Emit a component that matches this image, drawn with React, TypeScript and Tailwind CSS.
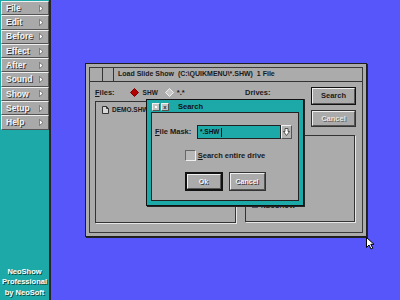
import React from 'react';

const menu = ['File', 'Edit', 'Before', 'Effect', 'After', 'Sound', 'Show', 'Setup', 'Help'];

const raised = 'border border-t-[#f0f0f0] border-l-[#f0f0f0] border-b-[#555] border-r-[#555]';
const embossed = 'text-[#f4f4f4] [text-shadow:1px_1px_0_#3a3a3a]';

const Arrow = () => (
  <svg width="5" height="7" viewBox="0 0 5 7" className="mr-[4px]">
    <polygon points="0.5,0.5 4,3.5 0.5,6.5" fill="#fff" stroke="#444" strokeWidth="0.6" />
  </svg>
);

const Diamond = ({ fill, stroke }: { fill: string; stroke: string }) => (
  <svg width="9" height="9" viewBox="0 0 9 9">
    <polygon points="4.5,0.5 8.5,4.5 4.5,8.5 0.5,4.5" fill={fill} stroke={stroke} strokeWidth="1" />
  </svg>
);

const DocIcon = () => (
  <svg width="7" height="8" viewBox="0 0 7 8">
    <path d="M0.5 0.5 H4.5 L6.5 2.5 V7.5 H0.5 Z" fill="#d8d8d8" stroke="#333" strokeWidth="1" />
    <path d="M4.5 0.5 V2.5 H6.5" fill="none" stroke="#333" strokeWidth="1" />
  </svg>
);

const DownArrow = () => (
  <svg width="7" height="8" viewBox="0 0 7 8">
    <polygon points="2,0.5 5,0.5 5,3.5 6.5,3.5 3.5,7.5 0.5,3.5 2,3.5" fill="#fff" stroke="#333" strokeWidth="0.8" />
  </svg>
);

const Cursor = () => (
  <svg width="10" height="13" viewBox="0 0 10 13" className="absolute left-[366px] top-[237px]">
    <path d="M0.5 0.5 V10.5 L3 8 L5 12 L6.8 11.2 L4.8 7.3 H8 Z" fill="#fff" stroke="#000" strokeWidth="1" />
  </svg>
);

function Sidebar() {
  return (
    <div className="w-[51px] h-full bg-[#1ea9a9] border-r-2 border-[#262626] flex flex-col">
      <div className="flex flex-col pt-[1px]">
        {menu.map((m) => (
          <div
            key={m}
            className={`ml-[1px] w-[48px] h-[14.3px] bg-[#a9a9a9] ${raised} flex items-center justify-between`}
          >
            <span className={`pl-[4px] text-[8.5px] font-bold leading-none ${embossed}`}>{m}</span>
            <Arrow />
          </div>
        ))}
      </div>
      <div className="mt-auto pb-[2px] text-center text-[7.5px] font-bold leading-[10.5px] text-white [text-shadow:1px_1px_0_#0a4a4a]">
        <div>NeoShow</div>
        <div>Professional</div>
        <div>by NeoSoft</div>
      </div>
    </div>
  );
}

function LoadDialog() {
  return (
    <div className="absolute left-[85px] top-[63px] w-[282px] h-[174px] bg-[#ababab] border border-[#1e1e1e] p-[3px] shadow-[1px_1px_0_#222]">
      <div className="h-full border border-[#3a3a3a] flex flex-col">
        <div className="h-[14px] flex items-center border-b border-[#333]">
          <div className="w-[13px] h-full border-r border-[#333]" />
          <div className="w-[11px] h-full border-r border-[#333]" />
          <span className="pl-[4px] text-[7px] font-bold text-[#1a1a1a] whitespace-pre">
            {'Load Slide Show  (C:\\QUIKMENU\\*.SHW)  1 File'}
          </span>
        </div>
        <div className="flex-1 flex">
          <div className="ml-[5px] w-[141px] flex flex-col">
            <div className="mt-[6px] h-[9px] flex items-center text-[7.5px] font-bold text-[#1a1a1a]">
              <span>
                <u>F</u>iles:
              </span>
              <span className="ml-[15px] flex">
                <Diamond fill="#b40000" stroke="#7a0000" />
              </span>
              <span className="ml-[4px] text-[6.5px]">SHW</span>
              <span className="ml-[7px] flex">
                <Diamond fill="#c8c8c8" stroke="#eee" />
              </span>
              <span className="ml-[3px]">*.*</span>
            </div>
            <div className="mt-[4px] h-[122px] border border-[#333] shadow-[1px_1px_0_#e6e6e6] pl-[6px] pt-[3px]">
              <div className="flex items-center gap-[3px] h-[9px]">
                <DocIcon />
                <span className="text-[6.5px] font-bold text-[#1a1a1a]">DEMO.SHW</span>
              </div>
            </div>
          </div>
          <div className="ml-[9px] w-[112px] flex flex-col">
            <div className="flex">
              <div className="w-[60px] flex flex-col">
                <span className="mt-[6px] h-[9px] text-[7.5px] font-bold text-[#1a1a1a] leading-[9px]">Drives:</span>
                <div className="mt-[2px] h-[14px] border border-[#333] bg-[#1ea9a9]" />
              </div>
              <div className="ml-auto mr-[1px] w-[45px] flex flex-col">
                <div className="mt-[5px] h-[18px] border border-[#111] bg-[#ababab]">
                  <div className={`h-full ${raised} flex items-center justify-center text-[7.5px] font-bold text-[#1a1a1a]`}>
                    Search
                  </div>
                </div>
                <div className="mt-[5px] h-[17px] border border-[#333] bg-[#ababab]">
                  <div
                    className={`h-full ${raised} flex items-center justify-center text-[7.5px] font-bold text-[#e6e6e6] [text-shadow:1px_1px_0_#666]`}
                  >
                    Cancel
                  </div>
                </div>
              </div>
            </div>
            <div className="mt-[8px] w-[110px] h-[87px] border border-[#333] shadow-[1px_1px_0_#e6e6e6] pl-[6px] pt-[65px]">
              <div className="flex items-center gap-[3px] h-[9px]">
                <span className="w-[6px] h-[4px] bg-[#7d9a5a] border border-[#556]" />
                <span className="text-[6.5px] font-bold text-[#1a1a1a]">NEOSHOW</span>
              </div>
            </div>
          </div>
        </div>
      </div>
    </div>
  );
}

function SearchDialog() {
  return (
    <div className="absolute left-[146px] top-[99px] w-[158px] h-[107px] bg-[#1ea9a9] border border-[#111] px-[4px] pt-[2px] pb-[4px] flex flex-col shadow-[1px_1px_0_#222]">
      <div className="h-[10px] flex items-center">
        <div className={`ml-[1px] w-[8px] h-[8px] bg-[#c4c4c4] ${raised} flex items-center justify-center`}>
          <span className="w-[2px] h-[2px] bg-white" />
        </div>
        <div className={`ml-[1px] w-[8px] h-[8px] bg-[#c4c4c4] ${raised} flex items-center justify-center text-[6px] font-bold leading-none text-[#333]`}>
          x
        </div>
        <span className="ml-[9px] text-[7.5px] font-bold text-[#111]">Search</span>
      </div>
      <div className="flex-1 bg-[#ababab] border border-[#222] flex flex-col">
        <div className="mt-[12px] h-[14px] flex items-center">
          <span className="pl-[3px] w-[45px] text-[7.5px] font-bold text-[#1a1a1a]">
            <u>F</u>ile Mask:
          </span>
          <div className="w-[84px] h-[14px] bg-[#1ea9a9] border border-[#222] flex items-center pl-[2px]">
            <span className="text-[6.5px] font-bold text-[#111]">*.SHW</span>
            <span className="ml-[1px] w-[1px] h-[9px] bg-[#111]" />
          </div>
          <div className={`w-[11px] h-[14px] bg-[#b4b4b4] ${raised} flex items-center justify-center`}>
            <DownArrow />
          </div>
        </div>
        <div className="mt-[11px] flex justify-center items-center">
          <span className="w-[11px] h-[11px] bg-[#b8b8b8] border border-t-[#666] border-l-[#666] border-b-[#eee] border-r-[#eee]" />
          <span className="ml-[2px] text-[7.5px] font-bold text-[#1a1a1a]">
            <u>S</u>earch entire drive
          </span>
        </div>
        <div className="mt-[11px] flex justify-center items-start gap-[6px]">
          <div className="w-[38px] h-[19px] border-2 border-[#111] bg-[#ababab]">
            <div className={`h-full ${raised} flex items-center justify-center text-[7px] font-bold ${embossed}`}>Ok</div>
          </div>
          <div className="w-[37px] h-[19px] border border-[#333] bg-[#ababab]">
            <div className={`h-full ${raised} flex items-center justify-center text-[7px] font-bold ${embossed}`}>Cancel</div>
          </div>
        </div>
      </div>
    </div>
  );
}

export default function App() {
  return (
    <div className="relative w-[400px] h-[300px] overflow-hidden flex font-['Liberation_Sans',Arial,sans-serif]">
      <Sidebar />
      <div className="flex-1 h-full bg-[#5656fa]" />
      <LoadDialog />
      <SearchDialog />
      <Cursor />
    </div>
  );
}
